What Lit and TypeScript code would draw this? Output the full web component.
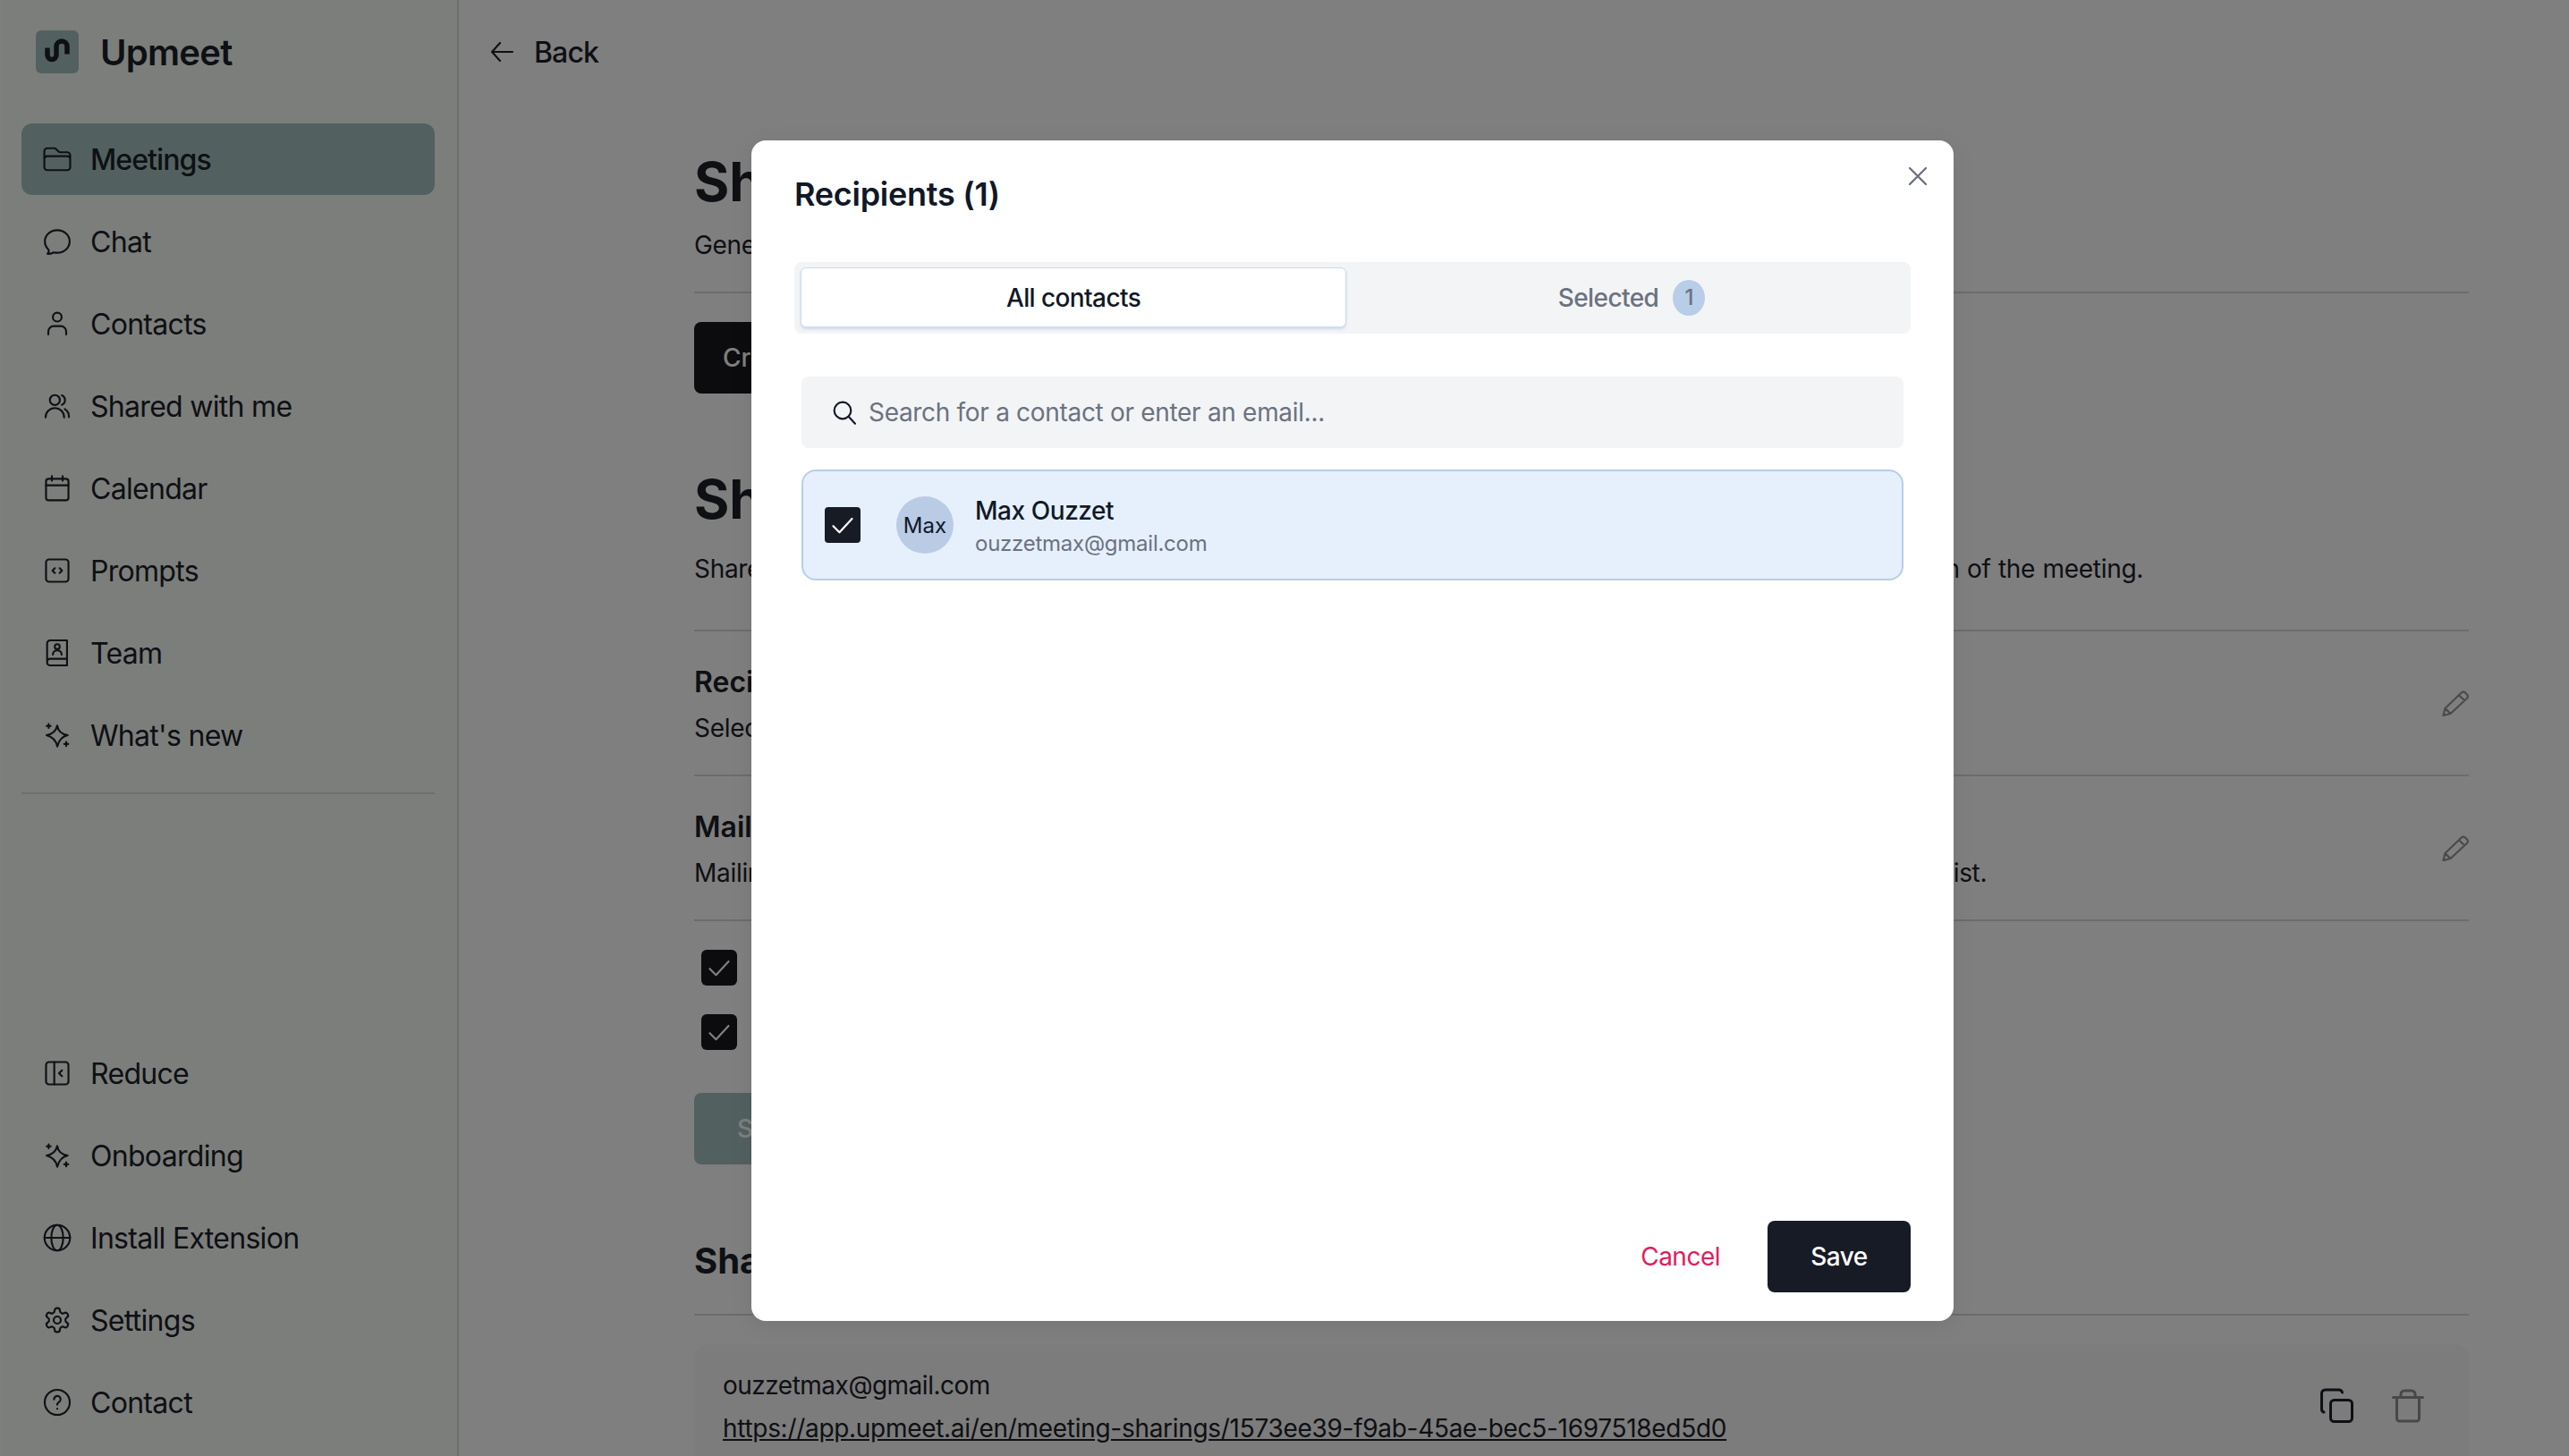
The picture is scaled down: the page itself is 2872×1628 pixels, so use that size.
import { LitElement, html, css, svg } from "lit";
import { customElement } from "lit/decorators.js";

const ic = (body: unknown, vb = "0 0 24 24", sw = 1.6) => html`<svg class="ic" width="32" height="32" viewBox=${vb} fill="none" stroke="currentColor" stroke-width=${sw} stroke-linecap="round" stroke-linejoin="round">${body}</svg>`;

const sparkle = svg`<path d="M12 4Q13 10.800 20.800 12Q14 13.400 12 21.500Q10.600 14 3 12Q10.600 10.800 12 4Z"/><path d="M4.800 2.600v3.400M3.100 4.300h3.400M19.500 17.700v3.400M17.800 19.400h3.400"/>`;

const icons: Record<string, [unknown, string?, number?]> = {
  folder: [svg`<path d="M2.250 12.750V12A2.250 2.250 0 014.500 9.750h15A2.250 2.250 0 0121.750 12v.750m-8.690-6.440l-2.120-2.120a1.500 1.500 0 00-1.061-.440H4.500A2.250 2.250 0 002.250 6v12a2.250 2.250 0 002.250 2.250h15A2.250 2.250 0 0021.750 18V9a2.250 2.250 0 00-2.250-2.250h-5.379a1.500 1.500 0 01-1.060-.440z"/>`, "1.200 1.200 21.600 21.600", 1.45],
  chat: [svg`<path d="M12 20.250c4.970 0 9-3.694 9-8.250s-4.030-8.250-9-8.250S3 7.444 3 12c0 2.104.859 4.023 2.273 5.480.432.447.740 1.040.586 1.641a4.483 4.483 0 01-.923 1.785A5.969 5.969 0 006 21c1.282 0 2.470-.402 3.445-1.087.810.220 1.668.337 2.555.337z"/>`, "1.600 1.600 20.800 20.800", 1.4],
  user: [svg`<circle cx="12" cy="6.400" r="3.700"/><path d="M4.500 21v-2.500A4.500 4.500 0 019 14h6a4.500 4.500 0 014.500 4.500V21"/>`],
  users: [svg`<circle cx="10" cy="7" r="4.200"/><path d="M2.200 21.500a7.800 7.800 0 0115.600 0M15.800 3a4.300 4.300 0 010 8M18.300 14.500a7.500 7.500 0 013.500 6.800"/>`],
  calendar: [svg`<rect x="2.600" y="4" width="18.800" height="18" rx="2.200"/><path d="M2.600 9.500h18.800M7.500 1.800v3.800M16.500 1.800v3.800"/>`],
  prompt: [svg`<rect x="2.600" y="2.600" width="18.800" height="18.800" rx="2.500"/><path d="M10 10l-2 2 2 2M14 10l2 2-2 2"/>`],
  team: [svg`<path d="M20.200 1.500H6A2.500 2.500 0 003.500 4v16A2.500 2.500 0 006 22.500h14.200zM3.500 19.500A2.500 2.500 0 016 17h14.200"/><circle cx="12" cy="6.800" r="2.100"/><path d="M8.300 13.500a3.700 3.700 0 017.400 0"/>`],
  sparkle: [sparkle],
  reduce: [svg`<rect x="2.600" y="2.600" width="18.800" height="18.800" rx="2.500"/><path d="M9.500 2.600v18.800M16 9.500L13.500 12l2.500 2.500"/>`],
  globe: [svg`<circle cx="12" cy="12" r="10.700"/><ellipse cx="12" cy="12" rx="5" ry="10.700"/><path d="M1.300 12h21.400"/>`],
  gear: [svg`<path d="M12.220 2h-.440a2 2 0 00-2 2v.180a2 2 0 01-1 1.730l-.430.250a2 2 0 01-2 0l-.150-.080a2 2 0 00-2.730.730l-.220.380a2 2 0 00.730 2.730l.150.100a2 2 0 011 1.720v.510a2 2 0 01-1 1.740l-.150.090a2 2 0 00-.730 2.730l.220.380a2 2 0 002.730.730l.150-.080a2 2 0 012 0l.430.250a2 2 0 011 1.730V20a2 2 0 002 2h.440a2 2 0 002-2v-.180a2 2 0 011-1.730l.430-.250a2 2 0 012 0l.150.080a2 2 0 002.730-.730l.220-.390a2 2 0 00-.730-2.730l-.150-.080a2 2 0 01-1-1.740v-.500a2 2 0 011-1.740l.150-.090a2 2 0 00.730-2.730l-.220-.380a2 2 0 00-2.730-.730l-.150.080a2 2 0 01-2 0l-.430-.250a2 2 0 01-1-1.730V4a2 2 0 00-2-2z"/><circle cx="12" cy="12" r="3"/>`],
  help: [svg`<circle cx="12" cy="12" r="10.500"/><path d="M9.300 9.500a2.750 2.750 0 115 1.500c-.700.800-2.300 1.300-2.300 2.800v.200"/><path d="M12 17.300v.100"/>`],
};

const topNav = [["folder", "Meetings"], ["chat", "Chat"], ["user", "Contacts"], ["users", "Shared with me"], ["calendar", "Calendar"], ["prompt", "Prompts"], ["team", "Team"], ["sparkle", "What's new"]];
const bottomNav = [["reduce", "Reduce"], ["sparkle", "Onboarding"], ["globe", "Install Extension"], ["gear", "Settings"], ["help", "Contact"]];

const pencil = html`<svg class="pencil" width="30" height="30" viewBox="0 0 30 30" fill="none" stroke="currentColor" stroke-width="2.200" stroke-linejoin="round"><path d="M1.500 28L3.500 20 21.500 2.800a3.200 3.200 0 014.500-.300l2 2a3 3 0 010 4.300L9.500 26zM19 5.500l6.500 6M3.500 20l6 6"/></svg>`;
const check = html`<svg width="28" height="28" viewBox="0 0 24 24" fill="none" stroke="currentColor" stroke-width="1.900" stroke-linecap="round" stroke-linejoin="round"><path d="M3 13l6 6L21 6"/></svg>`;

@customElement("app-root")
export class AppRoot extends LitElement {
  static styles = css`
    :host { display: block; width: 100%; height: 100vh; overflow: hidden; position: relative; font-family: Inter, "Liberation Sans", sans-serif; color: #1c2028; background: #fff; }
    * { box-sizing: border-box; }
    .page { display: flex; height: 100%; }
    .side { width: 513px; flex: none; height: 100%; background: #f8fcf8; border-right: 2px solid #d8dad8; border-left: 2px solid #fff; display: flex; flex-direction: column; padding: 34px 25px 20px 22px; }
    .brand { display: flex; align-items: center; gap: 24px; padding-left: 16px; height: 48px; margin-bottom: 56px; font-size: 40px; font-weight: 600; letter-spacing: -0.7px; color: #1c2028; }
    .logo { width: 48px; height: 48px; border-radius: 6px; background: #a4c2c0; display: block; }
    .nav { display: flex; flex-direction: column; gap: 12px; }
    .item { display: flex; align-items: center; height: 80px; gap: 21px; padding-left: 24px; font-size: 32px; letter-spacing: -0.7px; border-radius: 12px; }
    .item.on { background: #a4c2c0; font-weight: 500; letter-spacing: -0.9px; }
    .ic { flex: none; display: block; }
    .rule { height: 2px; background: #dadcda; margin-top: 24px; }
    .nav.low { margin-top: auto; }
    .main { flex: 1; min-width: 0; height: 100%; overflow: hidden; }
    .back { display: flex; align-items: center; gap: 20px; height: 48px; margin: 34px 0 0 32px; font-size: 32px; font-weight: 500; letter-spacing: -0.9px; }
    .content { padding: 0 112px 0 263px; }
    h1 { margin: 0; font-size: 60px; line-height: 72px; font-weight: 700; white-space: nowrap; }
    h2 { margin: 0; font-size: 40px; line-height: 56px; font-weight: 700; white-space: nowrap; }
    h3 { margin: 0; font-size: 32px; line-height: 44px; font-weight: 600; white-space: nowrap; }
    p { margin: 0; font-size: 28px; line-height: 40px; white-space: nowrap; letter-spacing: -0.3px; }
    .h1a { margin-top: 85px; }
    .suba { margin-top: 15px; }
    .line { height: 2px; background: #d8d8d8; }
    .l1 { margin-top: 32px; }
    .btn { display: block; width: 300px; height: 80px; border: 0; border-radius: 8px; background: #18181c; color: #fff; font: 500 28px Inter, sans-serif; text-align: left; padding: 0 32px; }
    .b1 { margin-top: 32px; }
    .h1b { margin-top: 82px; }
    .subb { margin-top: 22px; word-spacing: 0.8px; }
    .l2 { margin-top: 48px; }
    .setting { display: flex; align-items: center; justify-content: space-between; padding-top: 35px; padding-bottom: 32px; }
    .setting p { margin-top: 9px; }
    .setting .lst { word-spacing: 0.15px; }
    .pencil { color: #949494; flex: none; margin-top: -2px; }
    .check { display: flex; align-items: center; gap: 32px; margin: 32px 0 0 8px; font-size: 28px; }
    .box { width: 40px; height: 40px; border-radius: 6px; background: #18181c; color: #fff; display: flex; align-items: center; justify-content: center; flex: none; }
    .b2 { margin-top: 48px; background: #a4c2c0; padding: 0 48px; }
    .h2a { margin-top: 80px; }
    .l3 { margin-top: 31px; }
    .card { margin-top: 32px; height: 160px; border-radius: 16px; background: #f8f8f8; padding: 22px 48px 0 32px; display: flex; align-items: flex-start; justify-content: space-between; }
    .card p { line-height: 48px; letter-spacing: -0.5px; }
    .card a { color: inherit; text-decoration: underline; font-size: 28px; line-height: 48px; display: block; letter-spacing: -0.3px; }
    .tools { display: flex; gap: 40px; margin-top: 27px; }
    .tools .copy { color: #1c2028; }
    .tools .trash { color: #909090; }

    .backdrop { position: absolute; inset: 0; background: rgba(0,0,0,.5); display: flex; align-items: center; justify-content: center; padding: 6px 0 0 152px; }
    .modal { position: relative; width: 1344px; height: 1320px; background: #fff; border-radius: 16px; box-shadow: 0 4px 24px rgba(0,0,0,.08); padding: 36px 48px 32px; display: flex; flex-direction: column; color: #111827; }
    .title { margin: 0; font-size: 36px; line-height: 48px; font-weight: 600; letter-spacing: -0.26px; color: #111827; }
    .close { position: absolute; top: 28px; right: 28px; color: #6b7280; display: block; }
    .tabs { margin-top: 52px; height: 80px; padding: 6px 7px 7px; background: #f3f4f6; border-radius: 8px; display: grid; grid-template-columns: 1fr 1fr; gap: 14px; }
    .tab { display: flex; align-items: center; justify-content: center; gap: 16px; font-size: 28px; font-weight: 500; letter-spacing: -0.6px; color: #6b7280; border-radius: 6px; }
    .tab.on { background: #fff; color: #111827; border: 1px solid #cddcf0; box-shadow: 0 2px 3px rgba(184,205,232,.7); }
    .badge { width: 36px; height: 40px; border-radius: 50%; background: #b8cde8; display: flex; align-items: center; justify-content: center; font-size: 24px; color: #6b7280; }
    .body { padding: 0 8px; }
    .search { margin-top: 48px; height: 80px; border-radius: 8px; background: #f3f4f6; display: flex; align-items: center; gap: 12px; padding-left: 32px; font-size: 28px; letter-spacing: -0.31px; color: #6b7280; }
    .search .ic { color: #111827; }
    .search span { margin-left: -1px; }
    .row { margin-top: 24px; height: 124px; border: 2px solid #b8cde8; border-radius: 16px; background: #e6f0fc; display: flex; align-items: center; padding-left: 24px; }
    .row .box { border-radius: 4px; background: #171b26; }
    .avatar { width: 64px; height: 64px; border-radius: 50%; background: #b9cbe5; margin-left: 40px; display: flex; align-items: center; justify-content: center; font-size: 24px; font-weight: 400; color: #111827; flex: none; }
    .who { margin-left: 24px; padding-top: 4px; }
    .name { font-size: 28px; line-height: 38px; font-weight: 500; letter-spacing: -0.45px; color: #111827; }
    .mail { font-size: 24px; line-height: 36px; letter-spacing: -0.25px; color: #6b7280; }
    .foot { margin-top: auto; display: flex; align-items: center; justify-content: flex-end; gap: 53px; }
    .cancel { font-size: 28px; letter-spacing: -0.5px; color: #e11d5c; }
    .save { width: 160px; height: 80px; border-radius: 8px; background: #171b26; color: #fff; font-size: 28px; font-weight: 500; letter-spacing: -0.5px; display: flex; align-items: center; justify-content: center; }
  `;

  private navItem(i: string[], on = false) {
    const [b, vb, sw] = icons[i[0]];
    return html`<div class="item ${on ? "on" : ""}">${ic(b, vb, sw)}<span>${i[1]}</span></div>`;
  }

  render() {
    return html`
      <div class="page">
        <aside class="side">
          <div class="brand">
            <svg class="logo" viewBox="0 0 48 48" fill="none" stroke="#1c2028" stroke-width="5.500" stroke-linecap="butt"><path d="M13 19.500v8a5 5 0 0010 0V18a6 6 0 0112 0v8.500"/></svg>
            <span>Upmeet</span>
          </div>
          <div class="nav">${topNav.map((n, i) => this.navItem(n, i === 0))}</div>
          <div class="rule"></div>
          <div class="nav low">${bottomNav.map((n) => this.navItem(n))}</div>
        </aside>
        <main class="main">
          <div class="back">${ic(svg`<path d="M10.500 19.500L3.750 12l6.750-7.500M4 12h17"/>`)}<span>Back</span></div>
          <div class="content">
            <h1 class="h1a">Share</h1>
            <p class="suba">Generate a link to share this meeting.</p>
            <div class="line l1"></div>
            <button class="btn b1">Create link</button>
            <h1 class="h1b">Share by email</h1>
            <p class="subb">Share this meeting's summary by email with the recipients you choose, automatically, right at the completion of the meeting.</p>
            <div class="line l2"></div>
            <div class="setting">
              <div><h3>Recipients</h3><p>Select the contacts to send the summary to.</p></div>
              ${pencil}
            </div>
            <div class="line"></div>
            <div class="setting two">
              <div><h3>Mailing lists</h3><p class="lst">Mailing lists let you easily automatically share your meetings with all of the members of your chosen mailing list.</p></div>
              ${pencil}
            </div>
            <div class="line"></div>
            <div class="check"><span class="box">${check}</span><span>Send the summary</span></div>
            <div class="check"><span class="box">${check}</span><span>Send the transcript</span></div>
            <button class="btn b2">Save</button>
            <h2 class="h2a">Shared links</h2>
            <div class="line l3"></div>
            <div class="card">
              <div>
                <p>ouzzetmax@gmail.com</p>
                <a href="#">https://app.upmeet.ai/en/meeting-sharings/1573ee39-f9ab-45ae-bec5-1697518ed5d0</a>
              </div>
              <div class="tools">
                <svg class="copy" width="40" height="40" viewBox="0 0 40 40" fill="none" stroke="currentColor" stroke-width="3" stroke-linecap="round"><rect x="13.500" y="13.500" width="24" height="24" rx="4"/><path d="M6 27a3.500 3.500 0 01-2.500-3.500V6A4 4 0 017.500 2h15a4 4 0 014 3"/></svg>
                <svg class="trash" width="40" height="40" viewBox="0 0 40 40" fill="none" stroke="currentColor" stroke-width="3" stroke-linecap="round" stroke-linejoin="round"><path d="M3.500 10.500h33M12 10.500V7a4 4 0 014-4h8a4 4 0 014 4v3.500M7.500 10.500V34a3 3 0 003 3h19a3 3 0 003-3V10.500"/></svg>
              </div>
            </div>
          </div>
        </main>
      </div>
      <div class="backdrop">
        <section class="modal">
          <svg class="close" width="24" height="24" viewBox="0 0 24 24" fill="none" stroke="currentColor" stroke-width="2.400" stroke-linecap="round"><path d="M3 3l18 18M21 3L3 21"/></svg>
          <h2 class="title">Recipients (1)</h2>
          <div class="tabs">
            <div class="tab on">All contacts</div>
            <div class="tab">Selected <span class="badge">1</span></div>
          </div>
          <div class="body">
            <div class="search">
              ${ic(svg`<circle cx="10.500" cy="10.500" r="7"/><path d="M15.500 15.500l5.500 6"/>`)}
              <span>Search for a contact or enter an email...</span>
            </div>
            <div class="row">
              <span class="box">${check}</span>
              <span class="avatar">Max</span>
              <div class="who"><div class="name">Max Ouzzet</div><div class="mail">ouzzetmax@gmail.com</div></div>
            </div>
          </div>
          <div class="foot">
            <span class="cancel">Cancel</span>
            <span class="save">Save</span>
          </div>
        </section>
      </div>
    `;
  }
}
